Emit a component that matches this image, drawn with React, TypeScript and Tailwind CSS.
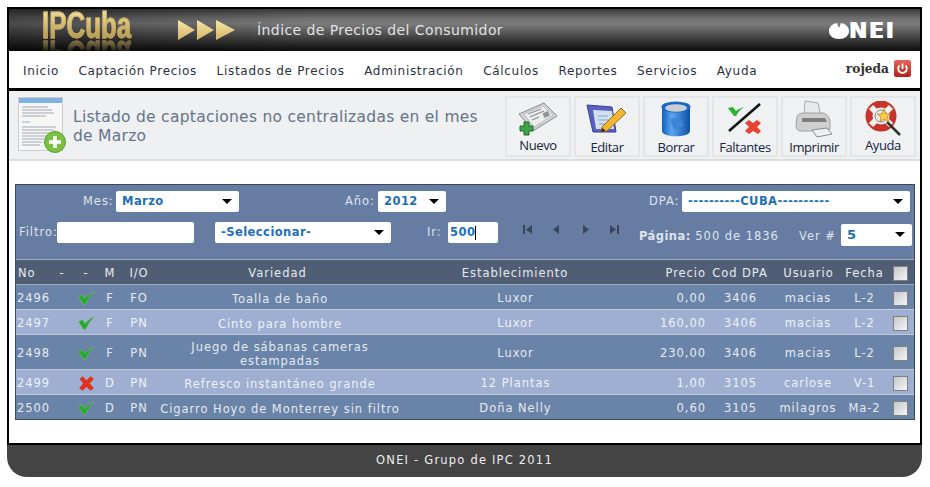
import type { ReactNode } from "react";

const MENU = ["Inicio", "Captación Precios", "Listados de Precios", "Administración", "Cálculos", "Reportes", "Servicios", "Ayuda"];

const ROWS = [
  { no: "2496", ok: true, m: "F", io: "FO", variedad: "Toalla de baño", est: "Luxor", precio: "0,00", dpa: "3406", user: "macias", fecha: "L-2" },
  { no: "2497", ok: true, m: "F", io: "PN", variedad: "Cinto para hombre", est: "Luxor", precio: "160,00", dpa: "3406", user: "macias", fecha: "L-2" },
  { no: "2498", ok: true, m: "F", io: "PN", variedad: "Juego de sábanas cameras estampadas", est: "Luxor", precio: "230,00", dpa: "3406", user: "macias", fecha: "L-2" },
  { no: "2499", ok: false, m: "D", io: "PN", variedad: "Refresco instantáneo grande", est: "12 Plantas", precio: "1,00", dpa: "3105", user: "carlose", fecha: "V-1" },
  { no: "2500", ok: true, m: "D", io: "PN", variedad: "Cigarro Hoyo de Monterrey sin filtro", est: "Doña Nelly", precio: "0,60", dpa: "3105", user: "milagros", fecha: "Ma-2" },
];

const GRID = "grid grid-cols-[36px_20px_28px_20px_38px_238px_236px_74px_68px_68px_44px_28px] items-center";
const BOX = "mx-auto h-[15px] w-[15px] appearance-none border border-[#808080] bg-[linear-gradient(135deg,#c4c6c9,#f6f6f6)]";

function Check() {
  return (
    <svg width="17" height="14" viewBox="0 0 17 14" className="mx-auto">
      <path d="M0.500 5.500 L4.500 3.800 L7 7.500 C9.500 4.500 13 2 16.500 0.500 C13 4 10 8 7.500 13.500 L5.500 13.500 Z" fill="#20ad28" stroke="#8fb08f" strokeWidth="0.600" />
    </svg>
  );
}

function Cross() {
  return (
    <svg width="15" height="15" viewBox="0 0 15 15" className="mx-auto">
      <path d="M1 3 L3.500 0.500 L7.500 4.500 L11.500 0.500 L14.500 3 L10.500 7.500 L14.500 12 L11.500 14.500 L7.500 10.500 L3.500 14.500 L0.500 12 L4.500 7.500 Z" fill="#e5301c" stroke="#b9381f" strokeWidth="0.500" />
    </svg>
  );
}

function Select({ value, className }: { value: string; className: string }) {
  return (
    <div className={`flex items-center justify-between rounded-[2px] bg-white pr-[7px] pl-[6px] font-bold tracking-[0.45px] text-[#1d6fb8] ${className}`}>
      <span>{value}</span>
      <span className="h-0 w-0 border-x-[5px] border-t-[5px] border-x-transparent border-t-black" />
    </div>
  );
}

function Tool({ label, children, low }: { label: string; children: ReactNode; low?: boolean }) {
  return (
    <div className="flex h-[61px] w-[66px] flex-col items-center border-2 border-[#e3e5e7] bg-[#f0f1f3] font-['Open_Sans',sans-serif] text-[13px] tracking-[-0.4px] text-[#14233f]">
      <div className="flex h-[38px] items-center pt-[3px]">{children}</div>
      <span className={`leading-[15px] ${low ? "mt-[4px]" : "mt-[2px]"}`}>{label}</span>
    </div>
  );
}

function NavIcon({ d }: { d: string }) {
  return (
    <svg width="10" height="11" viewBox="0 0 10 11">
      <path d={d} fill="#394559" />
    </svg>
  );
}

export default function App() {
  return (
    <div className="min-h-[487px] bg-white pt-[7px] pl-[7px] font-['DejaVu_Sans',sans-serif]">
      <div className="w-[915px] overflow-hidden rounded-b-[20px]">
        <div className="border-x-2 border-t-2 border-black">
          {/* cabecera */}
          <header className="relative flex h-[42px] items-center overflow-hidden bg-[linear-gradient(180deg,#3a3a3a_0%,#6f6f6f_22%,#7c7c7c_35%,#3c3c3c_72%,#0c0c0c_100%)]">
            <div className="absolute inset-y-0 left-0 w-[300px] bg-[linear-gradient(90deg,#00000066,#00000000)]" />
            <div className="relative ml-[33px] w-[92px] self-start">
              <span className="-mt-[1px] inline-block origin-left scale-x-[0.72] bg-[linear-gradient(180deg,#f7e6a6,#a98a3e)] bg-clip-text font-['Liberation_Sans',sans-serif] text-[36px] leading-[36px] font-bold text-transparent [-webkit-box-reflect:below_-9px_linear-gradient(transparent_50%,#000000f0)] [-webkit-text-stroke:0.8px_#c9ab62]">
                IPCuba
              </span>
            </div>
            <svg width="60" height="22" viewBox="0 0 60 22" className="relative ml-[43px] blur-[0.4px]">
              <defs>
                <linearGradient id="oro" x1="0" y1="0" x2="0" y2="1">
                  <stop offset="0" stopColor="#f7e7a8" />
                  <stop offset="1" stopColor="#d4b468" />
                </linearGradient>
              </defs>
              <path d="M1 1 L18 11 L1 21 Z M20 1 L37 11 L20 21 Z M39 1 L58 11 L39 21 Z" fill="url(#oro)" />
            </svg>
            <span className="relative ml-[20px] text-[14px] tracking-[0.42px] text-[#e3e3e3]">Índice de Precios del Consumidor</span>
            <div className="absolute top-[14px] right-[25px] flex items-center">
              <svg width="20" height="16" viewBox="0 0 20 16">
                <path d="M10 0 C16 0 20 3.500 20 8 C20 12.500 16 16 10 16 C4 16 0 12.500 0 8 C0 3.500 4 0 10 0 Z M8 0 L10 5 L12 0 Z" fill="#fff" fillRule="evenodd" />
              </svg>
              <span className="text-[22px] leading-[16px] font-bold tracking-[1.6px] text-white [text-shadow:1px_0_0_#fff]">NEI</span>
            </div>
          </header>

          {/* menu */}
          <nav className="flex h-[40px] items-center border-b-[3px] border-black bg-white pt-[3px] pl-[14px] text-[12px] tracking-[0.7px] text-[#2b3240]">
            <div className="flex gap-[19.500px]">
              {MENU.map((item) => (
                <span key={item}>{item}</span>
              ))}
            </div>
            <div className="-mt-[4px] mr-[9px] ml-auto flex items-center gap-[5px]">
              <span className="font-['DejaVu_Serif',serif] text-[12.200px] font-bold tracking-[0px] text-[#333]">rojeda</span>
              <svg width="17" height="17" viewBox="0 0 17 17">
                <defs>
                  <linearGradient id="apagar" x1="0" y1="0" x2="0" y2="1">
                    <stop offset="0" stopColor="#e4675c" />
                    <stop offset="1" stopColor="#b91f16" />
                  </linearGradient>
                </defs>
                <rect width="17" height="17" rx="2" fill="url(#apagar)" />
                <path d="M5.500 5.500 A4.300 4.300 0 1 0 11.500 5.500" fill="none" stroke="#fff" strokeWidth="1.800" />
                <path d="M8.500 3.500 V9" stroke="#fff" strokeWidth="1.800" />
              </svg>
            </div>
          </nav>

          {/* titulo */}
          <section className="flex h-[70px] items-center border-b-2 border-[#dcdee0] bg-[#eff0f2]">
            <div className="ml-[9px] h-[56px] w-[48px] shrink-0">
              <svg width="48" height="56" viewBox="0 0 48 56">
                <rect x="0.500" y="0.500" width="44" height="53" fill="#f6f6f6" stroke="#ccc" />
                <rect x="1" y="1" width="43" height="5" fill="#7fb2e0" />
                <path d="M4 10 H30 M4 13 H34 M4 16 H36 M4 19 H28 M4 25 H12 M4 30 H38 M4 33 H36 M4 36 H38 M4 39 H30 M4 42 H26 M4 45 H24 M4 48 H22" stroke="#a4a8ad" strokeWidth="1.200" />
                <circle cx="37" cy="45" r="10.500" fill="#7ac143" stroke="#5a9e2a" />
                <path d="M37 39 V51 M31 45 H43" stroke="#fff" strokeWidth="3.600" />
              </svg>
            </div>
            <h1 className="mt-[3px] ml-[7px] w-[415px] text-[15.500px] leading-[19px] font-normal tracking-[0.27px] text-[#667488]">
              Listado de captaciones no centralizadas en el mes de Marzo
            </h1>
            <div className="mt-[3px] ml-[17px] flex gap-[3px]">
              <Tool label="Nuevo">
                <svg width="42" height="34" viewBox="0 0 42 34">
                  <path d="M2 12 L27 1 L40 14 L16 29 Z" fill="#cfd2d4" stroke="#8b8f93" />
                  <path d="M7 12 L26 4 L36 13 L17 25 Z" fill="#eceded" stroke="#a8abae" strokeWidth="0.600" />
                  <path d="M11 12 L24 7 M13 15 L27 9 M15 18 L22 15" stroke="#8f9397" strokeWidth="1.300" />
                  <rect x="26" y="10" width="6" height="5" fill="#8f9397" transform="rotate(-25 29 12)" />
                  <path d="M7 20 H12 V24 H16 V29 H12 V33 H7 V29 H3 V24 H7 Z" fill="#3fa348" stroke="#1f6a2a" />
                </svg>
              </Tool>
              <Tool label="Editar" low>
                <svg width="42" height="34" viewBox="0 0 42 34">
                  <path d="M1 3 L26 5 L30 30 L7 30 Z" fill="#5b5fc0" stroke="#3a3d8e" />
                  <path d="M7 8 L26 9 L28 27 L10 27 Z" fill="#cfe0f2" />
                  <path d="M12 14 H22 M12 18 H24 M13 22 H20" stroke="#8ca3c4" />
                  <path d="M16 25 L35 6 L40 11 L21 29 L15 30 Z" fill="#f2b632" stroke="#a26b14" />
                  <path d="M15 30 L16.500 26 L19.500 29 Z" fill="#222" />
                </svg>
              </Tool>
              <Tool label="Borrar" low>
                <svg width="32" height="36" viewBox="0 0 32 36">
                  <defs>
                    <linearGradient id="cubo" x1="0" y1="0" x2="1" y2="0">
                      <stop offset="0" stopColor="#0f5fc0" />
                      <stop offset="0.350" stopColor="#5aa6ee" />
                      <stop offset="1" stopColor="#0c4fa8" />
                    </linearGradient>
                  </defs>
                  <path d="M2 6 V30 C2 37 30 37 30 30 V6 Z" fill="url(#cubo)" />
                  <ellipse cx="16" cy="6" rx="14.500" ry="5.500" fill="#1a68c4" />
                  <ellipse cx="16" cy="7" rx="11" ry="3.800" fill="#c9ced3" />
                  <path d="M10 18 L20 16 L24 25 L14 29 Z" fill="#3d83d6" />
                </svg>
              </Tool>
              <Tool label="Faltantes" low>
                <svg width="36" height="32" viewBox="0 0 36 32">
                  <path d="M33 1 L2 28" stroke="#111" strokeWidth="2.500" />
                  <path d="M1 5 L6 4 L9 8 C11 6 14 5 17 4 C14 6 11 9 9 13 L7 13 Z" fill="#2eb135" />
                  <path d="M18 20 L22 17 L26 20 L30 17 L34 20 L30 24 L34 28 L31 31 L26 28 L22 31 L18 28 L22 24 Z" fill="#e8432f" />
                </svg>
              </Tool>
              <Tool label="Imprimir" low>
                <svg width="38" height="38" viewBox="0 0 38 38">
                  <path d="M10 1 L23 3 L26 16 L9 16 Z" fill="#e9e9e9" stroke="#aaa" />
                  <path d="M2 17 C2 14 6 13 9 13 H27 C31 13 35 17 35 22 V28 C35 31 32 31 30 31 H6 C3 31 1 29 1 26 Z" fill="#cfcfcf" stroke="#a0a0a0" />
                  <path d="M7 18 H30 L32 22 H7 Z" fill="#7e7e7e" />
                  <path d="M17 30 L32 28 L37 34 L22 37 Z" fill="#efefef" stroke="#8a8a8a" />
                </svg>
              </Tool>
              <Tool label="Ayuda">
                <svg width="38" height="36" viewBox="0 0 38 36">
                  <circle cx="17" cy="15" r="12" fill="none" stroke="#c7342b" strokeWidth="7" />
                  <path d="M7 6 L12 11 M27 6 L22 11 M7 24 L12 19 M27 24 L22 19" stroke="#f4efe8" strokeWidth="6" />
                  <circle cx="17" cy="15" r="6" fill="#ececec" stroke="#8a8a8a" />
                  <path d="M23 21 L36 34" stroke="#333" strokeWidth="2.500" />
                  <path d="M20 8 L22 13 L27 13 L23 16 L25 21 L20 18 L16 21 L17 16 L13 13 L18 13 Z" fill="#f7d23c" stroke="#c4611d" strokeWidth="0.600" />
                </svg>
              </Tool>
            </div>
          </section>

          {/* contenido */}
          <main className="h-[282px] bg-white px-[6px] pt-[23px]">
            <div className="w-[900px] border border-[#3d4654] text-[11.500px] tracking-[0.95px] text-[#e6eaf0]">
              <div className="h-[74px] bg-[#667ca2] pt-[6px] text-[#dfe4ec]">
                <div className="flex h-[21px] items-center">
                  <span className="ml-[67px] w-[33px]">Mes:</span>
                  <Select value="Marzo" className="h-[21px] w-[123px]" />
                  <span className="ml-[106px] w-[33px]">Año:</span>
                  <Select value="2012" className="h-[21px] w-[68px]" />
                  <span className="ml-[203px] w-[33px]">DPA:</span>
                  <Select value="----------CUBA----------" className="h-[21px] w-[228px]" />
                </div>
                <div className="mt-[10px] flex h-[21px] items-center">
                  <span className="ml-[3px] w-[38px]">Filtro:</span>
                  <input aria-label="Filtro" className="h-[21px] w-[137px] rounded-[2px] bg-white" />
                  <Select value="-Seleccionar-" className="ml-[21px] h-[21px] w-[176px]" />
                  <span className="ml-[36px] w-[21px]">Ir:</span>
                  <div className="flex h-[21px] w-[50px] items-center rounded-[2px] bg-white pl-[2px] font-bold tracking-[0.45px] text-[#1d6fb8]">
                    500<span className="h-[14px] w-[1px] bg-black" />
                  </div>
                  <div className="mb-[6px] ml-[25px] flex w-[96px] justify-between">
                    <NavIcon d="M0 1 H2 V10 H0 Z M9 1 V10 L3 5.500 Z" />
                    <NavIcon d="M7 1 V10 L1 5.500 Z" />
                    <NavIcon d="M3 1 V10 L9 5.500 Z" />
                    <NavIcon d="M8 1 H10 V10 H8 Z M1 1 V10 L7 5.500 Z" />
                  </div>
                  <span className="mt-[8px] ml-[20px] w-[160px] whitespace-nowrap">
                    <b className="tracking-[0.45px]">Página:</b> 500 de 1836
                  </span>
                  <span className="mt-[8px] w-[42px] whitespace-nowrap">Ver #</span>
                  <Select value="5" className="mt-[4px] h-[22px] w-[71px] text-[13px]" />
                </div>
              </div>

              <div className={`${GRID} h-[26px] border-y border-[#a3acbb] bg-[#505e75] pt-[3px] text-center`}>
                <span className="pl-[2px] text-left">No</span>
                <span>-</span>
                <span>-</span>
                <span>M</span>
                <span>I/O</span>
                <span className="pl-[1px]">Variedad</span>
                <span className="pl-[2px]">Establecimiento</span>
                <span className="text-right">Precio</span>
                <span className="whitespace-nowrap">Cod DPA</span>
                <span className="pl-[1px]">Usuario</span>
                <span className="pl-[1px]">Fecha</span>
                <input type="checkbox" aria-label="Todos" className={BOX} />
              </div>

              {ROWS.map((r, i) => (
                <div key={r.no} className={`${GRID} border-b border-[#c2cbdc] pt-[3px] text-center last:h-[24px] last:border-b-0 ${i % 2 ? "bg-[#9eafd2] text-[#eef1f7]" : "bg-[#6a83a8]"} ${r.no === "2498" ? "h-[35px]" : "h-[25px]"}`}>
                  <span className="pl-[1px] text-left">{r.no}</span>
                  <span />
                  <span className="-mt-[1px] pl-[1px]">{r.ok ? <Check /> : <Cross />}</span>
                  <span>{r.m}</span>
                  <span>{r.io}</span>
                  <span className="pr-[14px] pl-[20px] leading-[14px] whitespace-pre-line">{r.no === "2498" ? "Juego de sábanas cameras\nestampadas" : <span className="-mx-[20px] whitespace-nowrap">{r.variedad}</span>}</span>
                  <span className="pl-[3px]">{r.est}</span>
                  <span className="text-right">{r.precio}</span>
                  <span className="pl-[1px]">{r.dpa}</span>
                  <span className="whitespace-nowrap">{r.user}</span>
                  <span className="pl-[1px] whitespace-nowrap">{r.fecha}</span>
                  <input type="checkbox" aria-label={`Seleccionar ${r.no}`} className={BOX} />
                </div>
              ))}
            </div>
          </main>
        </div>

        {/* pie */}
        <footer className="flex h-[34px] items-center justify-center border-t-2 border-black bg-[#444] text-[11.500px] tracking-[1.2px] text-[#eee]">
          ONEI - Grupo de IPC 2011
        </footer>
      </div>
    </div>
  );
}
